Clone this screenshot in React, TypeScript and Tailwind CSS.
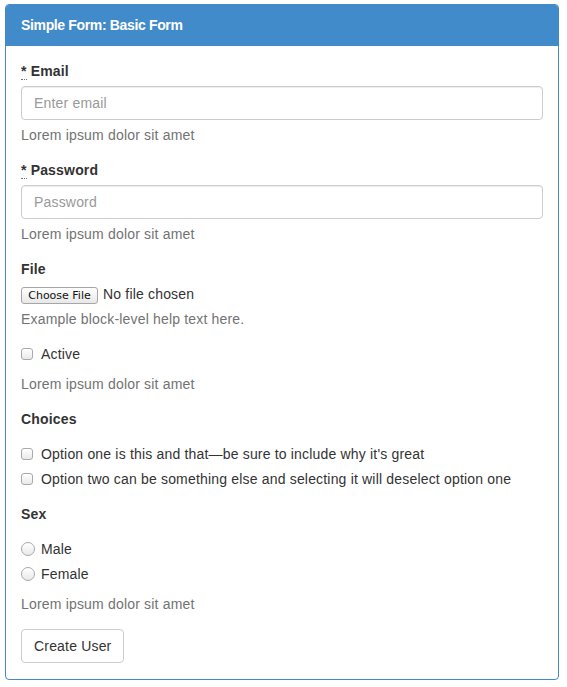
import React from 'react';

const Req = () => (
  <abbr title="required" className="no-underline border-b border-dotted border-[#777] cursor-help mr-1">*</abbr>
);

const Box = ({ radio }: { radio?: boolean }) => (
  <span
    className={
      'inline-block shrink-0 border border-[#a9a9a9] bg-gradient-to-b from-white to-[#e9e9e9] shadow-[inset_0_1px_0_#fff] ' +
      (radio ? 'w-[14px] h-[14px] rounded-full' : 'w-[12px] h-[12px] rounded-[3px]')
    }
  />
);

const Check = ({ label, radio }: { label: string; radio?: boolean }) => (
  <label className="flex items-center h-5 cursor-pointer">
    <span className="w-5 flex items-center">
      <Box radio={radio} />
    </span>
    <span>{label}</span>
  </label>
);

const Help = ({ children }: { children: React.ReactNode }) => (
  <p className="h-5 leading-5 text-[#737373]">{children}</p>
);

const inputCls =
  'h-[34px] w-full border border-[#ccc] rounded-[4px] px-3 shadow-[inset_0_1px_1px_rgba(0,0,0,0.075)] placeholder:text-[#999] outline-none tracking-[0.18px]';

export default function App() {
  return (
    <div
      className="bg-white min-h-[687px] pt-[4px] pl-[5px] text-[14px] leading-5 text-[#333] tracking-[0.18px]"
      style={{ fontFamily: '"Liberation Sans", Arial, sans-serif' }}
    >
      <div className="w-[554px] h-[676px] border border-[#428bca] rounded-[4px] overflow-hidden">
        <div className="h-[41px] bg-[#428bca] border-b border-[#428bca] px-[15px] flex items-center text-white text-[14px] font-bold tracking-[-0.35px]">
          Simple Form: Basic Form
        </div>

        <form className="px-[15px] pt-[15px] flex flex-col">
          <label className="font-bold h-5 mb-[5px]"><Req />Email</label>
          <input placeholder="Enter email" className={inputCls} />
          <div className="mt-[5px] mb-[15px]"><Help>Lorem ipsum dolor sit amet</Help></div>

          <label className="font-bold h-5 mb-[5px]"><Req />Password</label>
          <input type="password" placeholder="Password" className={inputCls} />
          <div className="mt-[5px] mb-[15px]"><Help>Lorem ipsum dolor sit amet</Help></div>

          <label className="font-bold h-5 mb-[5px]">File</label>
          <div className="h-5 flex items-center">
            <span
              className="h-[17px] w-[77px] mt-[3px] flex items-center justify-center border border-[#a6a6a6] rounded-[3px] bg-gradient-to-b from-white to-[#e8e8e8] text-[11px] leading-none text-[#111] tracking-normal"
              style={{ fontFamily: '"DejaVu Sans", sans-serif' }}
            >
              Choose File
            </span>
            <span className="ml-[5px]">No file chosen</span>
          </div>
          <div className="mt-[5px] mb-[15px]"><Help>Example block-level help text here.</Help></div>

          <Check label="Active" />
          <div className="mt-[10px] mb-[15px]"><Help>Lorem ipsum dolor sit amet</Help></div>

          <label className="font-bold h-5 mb-[15px]">Choices</label>
          <Check label="Option one is this and that—be sure to include why it's great" />
          <div className="mt-[5px]">
            <Check label="Option two can be something else and selecting it will deselect option one" />
          </div>

          <label className="font-bold h-5 mt-[15px] mb-[15px]">Sex</label>
          <Check label="Male" radio />
          <div className="mt-[5px]"><Check label="Female" radio /></div>
          <div className="mt-[10px] mb-[15px]"><Help>Lorem ipsum dolor sit amet</Help></div>

          <div>
            <button type="button" className="h-[34px] px-3 border border-[#ccc] rounded-[4px] bg-white text-[#333] tracking-[0.18px]">
              Create User
            </button>
          </div>
        </form>
      </div>
    </div>
  );
}
